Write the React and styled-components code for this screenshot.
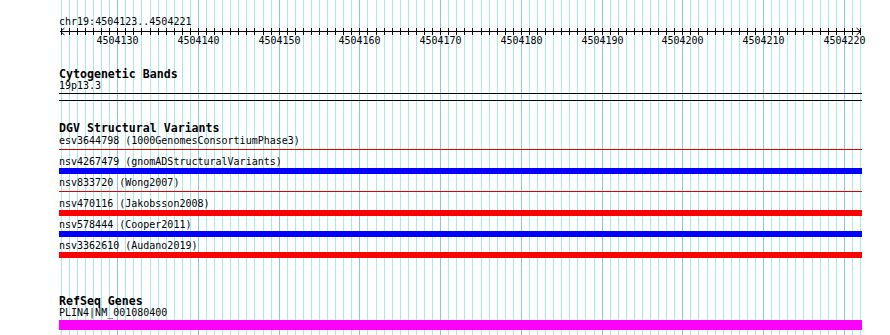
import React from 'react';
import styled, { createGlobalStyle } from 'styled-components';

const GlobalStyle = createGlobalStyle`
  body {
    margin: 0;
    background: #ffffff;
    font-family: "DejaVu Sans Mono", "Liberation Mono", monospace;
    color: #000;
  }
`;

const START = 4504123;
const END = 4504221;
const BASES = 100;
const lineX = (i) => Math.floor(61.2 + 8.0733 * i);

const Page = styled.div`
  position: relative;
  width: 890px;
  height: 335px;
  overflow: hidden;
  display: flex;
  flex-direction: column;
`;

const GridLayer = styled.svg`
  position: absolute;
  left: 0;
  top: 0;
  width: 890px;
  height: 335px;
  pointer-events: none;
`;

const Ruler = styled.svg`
  position: relative;
  display: block;
  width: 890px;
  height: 50px;
  flex: none;
`;

const Tracks = styled.div`
  position: relative;
  display: flex;
  flex-direction: column;
  padding-left: 59px;
  width: 803px;
`;

const Track = styled.section`
  display: flex;
  flex-direction: column;
  margin-top: ${(p) => p.$gap}px;
`;

const TrackTitle = styled.div`
  font-weight: bold;
  font-size: 11.6px;
  line-height: 12px;
  height: 12px;
  white-space: pre;
`;

const Label = styled.div`
  font-size: 10px;
  line-height: 10px;
  height: 10px;
  white-space: pre;
  margin-top: ${(p) => p.$gap || 0}px;
`;

const CytoBand = styled.div`
  margin-top: 2px;
  height: 6px;
  border-top: 1px solid #000;
  border-bottom: 1px solid #000;
`;

const Rows = styled.div`
  display: flex;
  flex-direction: column;
  margin-top: 2px;
`;

const Row = styled.div`
  display: flex;
  flex-direction: column;
  height: 21px;
`;

const BarSlot = styled.div`
  margin-top: 1px;
  height: 6px;
  display: flex;
  flex-direction: column;
`;

const Bar = styled.div`
  background: ${(p) => p.$color};
  height: ${(p) => (p.$thin ? 1 : 6)}px;
  margin-top: ${(p) => (p.$thin ? 2 : 0)}px;
`;

const GeneBar = styled.div`
  margin-top: 2px;
  height: 10px;
  background: #ff00ff;
`;

const variants = [
  { label: 'esv3644798 (1000GenomesConsortiumPhase3)', color: '#e00000', thin: true },
  { label: 'nsv4267479 (gnomADStructuralVariants)', color: '#0000ff' },
  { label: 'nsv833720 (Wong2007)', color: '#e00000', thin: true },
  { label: 'nsv470116 (Jakobsson2008)', color: '#ff0000' },
  { label: 'nsv578444 (Cooper2011)', color: '#0000ff' },
  { label: 'nsv3362610 (Audano2019)', color: '#ff0000' },
];

const isMajor = (i) => (i - 7) % 10 === 0;

const Grid = () => (
  <GridLayer>
    {Array.from({ length: BASES }, (_, i) => (
      <rect
        key={i}
        x={lineX(i)}
        y={0}
        width={1}
        height={335}
        fill={isMajor(i) ? '#86c8ee' : '#a8e8ee'}
      />
    ))}
  </GridLayer>
);

const Scale = () => (
  <Ruler>
    <text x={59} y={25} fontSize="10" fontFamily="DejaVu Sans Mono, monospace">
      chr19:{START}..{END}
    </text>
    <rect x={60} y={31} width={801} height={1} fill="#000" />
    <path d="M64.5 28 L60.5 31.5 L64.5 35" fill="none" stroke="#000" strokeWidth="1" />
    <path d="M856.5 28 L860.5 31.5 L856.5 35" fill="none" stroke="#000" strokeWidth="1" />
    {Array.from({ length: BASES }, (_, i) => (
      <rect key={i} x={lineX(i)} y={28} width={1} height={7} fill="#000" />
    ))}
    {Array.from({ length: BASES }, (_, i) => i)
      .filter(isMajor)
      .map((i) => (
        <text
          key={i}
          x={lineX(i) + 0.5}
          y={44}
          fontSize="10"
          textAnchor="middle"
          fontFamily="DejaVu Sans Mono, monospace"
        >
          {START + i}
        </text>
      ))}
  </Ruler>
);

export default function App() {
  return (
    <>
      <GlobalStyle />
      <Page>
        <Grid />
        <Scale />
        <Tracks>
          <Track $gap={18}>
            <TrackTitle>Cytogenetic Bands</TrackTitle>
            <Label $gap={1}>19p13.3</Label>
            <CytoBand />
          </Track>

          <Track $gap={21}>
            <TrackTitle>DGV Structural Variants</TrackTitle>
            <Rows>
              {variants.map((v) => (
                <Row key={v.label}>
                  <Label>{v.label}</Label>
                  <BarSlot>
                    <Bar $color={v.color} $thin={v.thin} />
                  </BarSlot>
                </Row>
              ))}
            </Rows>
          </Track>

          <Track $gap={33}>
            <TrackTitle>RefSeq Genes</TrackTitle>
            <Label $gap={1}>PLIN4|NM_001080400</Label>
            <GeneBar />
          </Track>
        </Tracks>
      </Page>
    </>
  );
}
